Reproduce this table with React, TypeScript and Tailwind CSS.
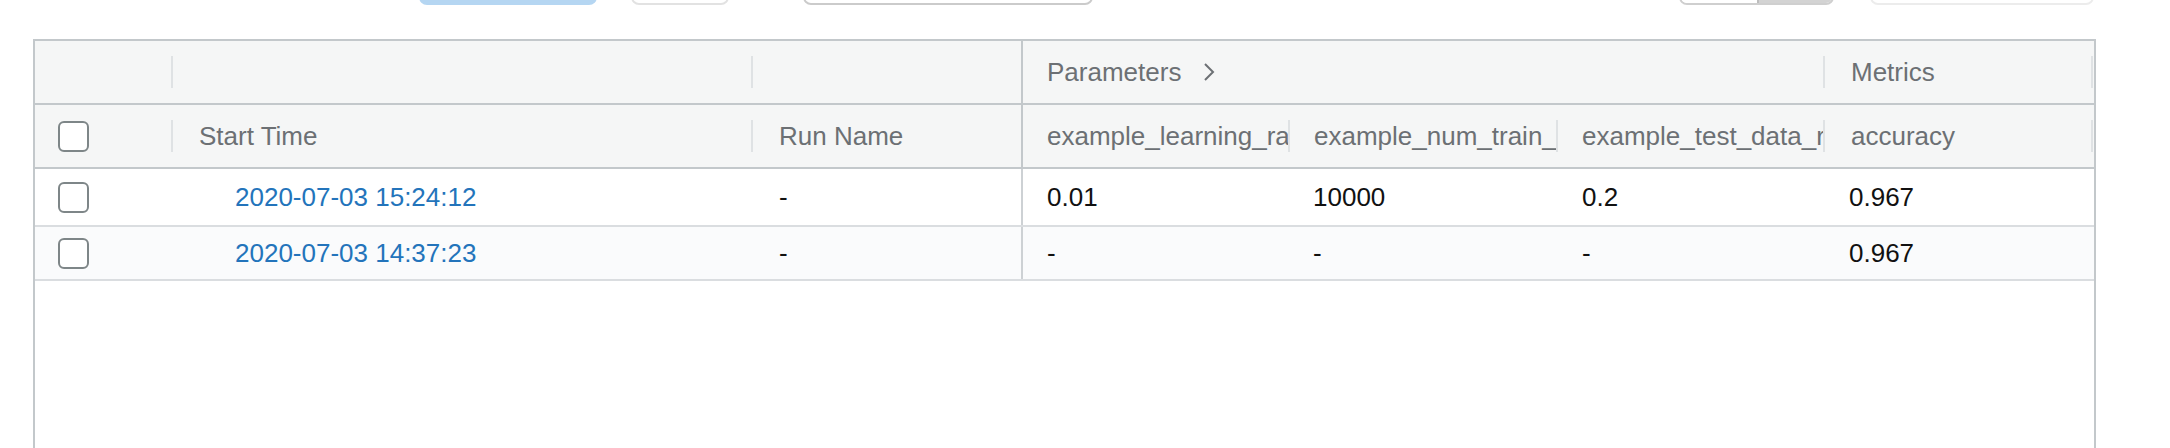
import React from "react";

type Run = {
  id: string;
  startTime: string;
  runName: string;
  learningRate: string;
  numTrain: string;
  testData: string;
  accuracy: string;
};

const runs: Run[] = [
  { id: "r1", startTime: "2020-07-03 15:24:12", runName: "-", learningRate: "0.01", numTrain: "10000", testData: "0.2", accuracy: "0.967" },
  { id: "r2", startTime: "2020-07-03 14:37:23", runName: "-", learningRate: "-", numTrain: "-", testData: "-", accuracy: "0.967" },
];

const cols = "grid grid-cols-[138px_580px_268px_269px_268px_267px_268px]";

function Divider() {
  return <span className="ml-auto w-[2px] h-[32px] bg-[#dfe2e4] shrink-0" />;
}

function Checkbox() {
  return <span className="block w-[31px] h-[31px] rounded-[6px] border-2 border-[#7e8688] bg-white" />;
}

export default function App() {
  return (
    <div className="w-[2170px] h-[448px] overflow-hidden bg-white font-['Liberation_Sans',Arial,sans-serif] text-[26px]">
      {/* Toolbar, scrolled mostly out of view */}
      <div className="h-[5px] overflow-hidden flex items-end">
        <div className="ml-[419px] w-[178px] h-8 rounded-lg bg-[#b5d6f2] shrink-0" />
        <div className="ml-[34px] w-[98px] h-8 rounded-lg border-2 border-[#e2e2e2] bg-white shrink-0" />
        <div className="ml-[74px] w-[290px] h-8 rounded-lg border-2 border-[#cbcbcb] bg-white shrink-0" />
        <div className="ml-[586px] w-[155px] h-8 rounded-lg border-2 border-[#cfcfcf] flex overflow-hidden shrink-0">
          <div className="w-[76px] bg-white" />
          <div className="flex-1 bg-[#d3d3d3] border-l-2 border-[#bdbdbd]" />
        </div>
        <div className="ml-[36px] w-[224px] h-8 rounded-lg border-2 border-[#ececec] bg-white shrink-0" />
      </div>

      {/* Runs table */}
      <div className="mt-[34px] ml-[33px] w-[2063px] border-2 border-b-0 border-[#c3c8cb]">
        {/* Column groups */}
        <div className={`${cols} h-[64px] bg-[#f5f6f6] border-b-2 border-[#c3c8cb] text-[#6c7074]`}>
          <div className="flex items-center"><Divider /></div>
          <div className="flex items-center"><Divider /></div>
          <div />
          <div className="col-span-3 flex items-center border-l-2 border-[#c3c8cb] pl-6">
            <span>Parameters</span>
            <svg width="12" height="20" viewBox="0 0 12 20" className="ml-[22px]">
              <polyline points="2,2 10,10 2,18" fill="none" stroke="#6c7074" strokeWidth="2" />
            </svg>
            <Divider />
          </div>
          <div className="flex items-center pl-[26px]">
            <span>Metrics</span>
            <Divider />
          </div>
        </div>

        {/* Column headers */}
        <div className={`${cols} h-[64px] bg-[#f5f6f6] border-b-2 border-[#c3c8cb] text-[#6c7074]`}>
          <div className="flex items-center pl-[23px]">
            <Checkbox />
            <Divider />
          </div>
          <div className="flex items-center pl-[26px]">
            <span>Start Time</span>
            <Divider />
          </div>
          <div className="flex items-center pl-[26px]">Run Name</div>
          {["example_learning_rate", "example_num_train_iterations", "example_test_data_ratio"].map((p, i) => (
            <div key={p} className={`flex items-center pl-6 overflow-hidden ${i === 0 ? "border-l-2 border-[#c3c8cb]" : ""}`}>
              <span className="whitespace-nowrap overflow-hidden flex-1">{p}</span>
              <Divider />
            </div>
          ))}
          <div className="flex items-center pl-[26px]">
            <span>accuracy</span>
            <Divider />
          </div>
        </div>

        {/* Rows */}
        {runs.map((r, i) => (
          <div
            key={r.id}
            className={`${cols} border-b-2 border-[#dadde0] text-[#111] ${i === 0 ? "h-[58px] bg-white" : "h-[54px] bg-[#fafbfc]"}`}
          >
            <div className="flex items-center pl-[23px]"><Checkbox /></div>
            <div className="flex items-center pl-[62px] text-[#2374bb]">{r.startTime}</div>
            <div className="flex items-center pl-[26px]">{r.runName}</div>
            <div className="flex items-center pl-6 border-l-2 border-[#cdd1d4]">{r.learningRate}</div>
            <div className="flex items-center pl-[23px]">{r.numTrain}</div>
            <div className="flex items-center pl-6">{r.testData}</div>
            <div className="flex items-center pl-6">{r.accuracy}</div>
          </div>
        ))}

        <div className="h-[200px] bg-white" />
      </div>
    </div>
  );
}
